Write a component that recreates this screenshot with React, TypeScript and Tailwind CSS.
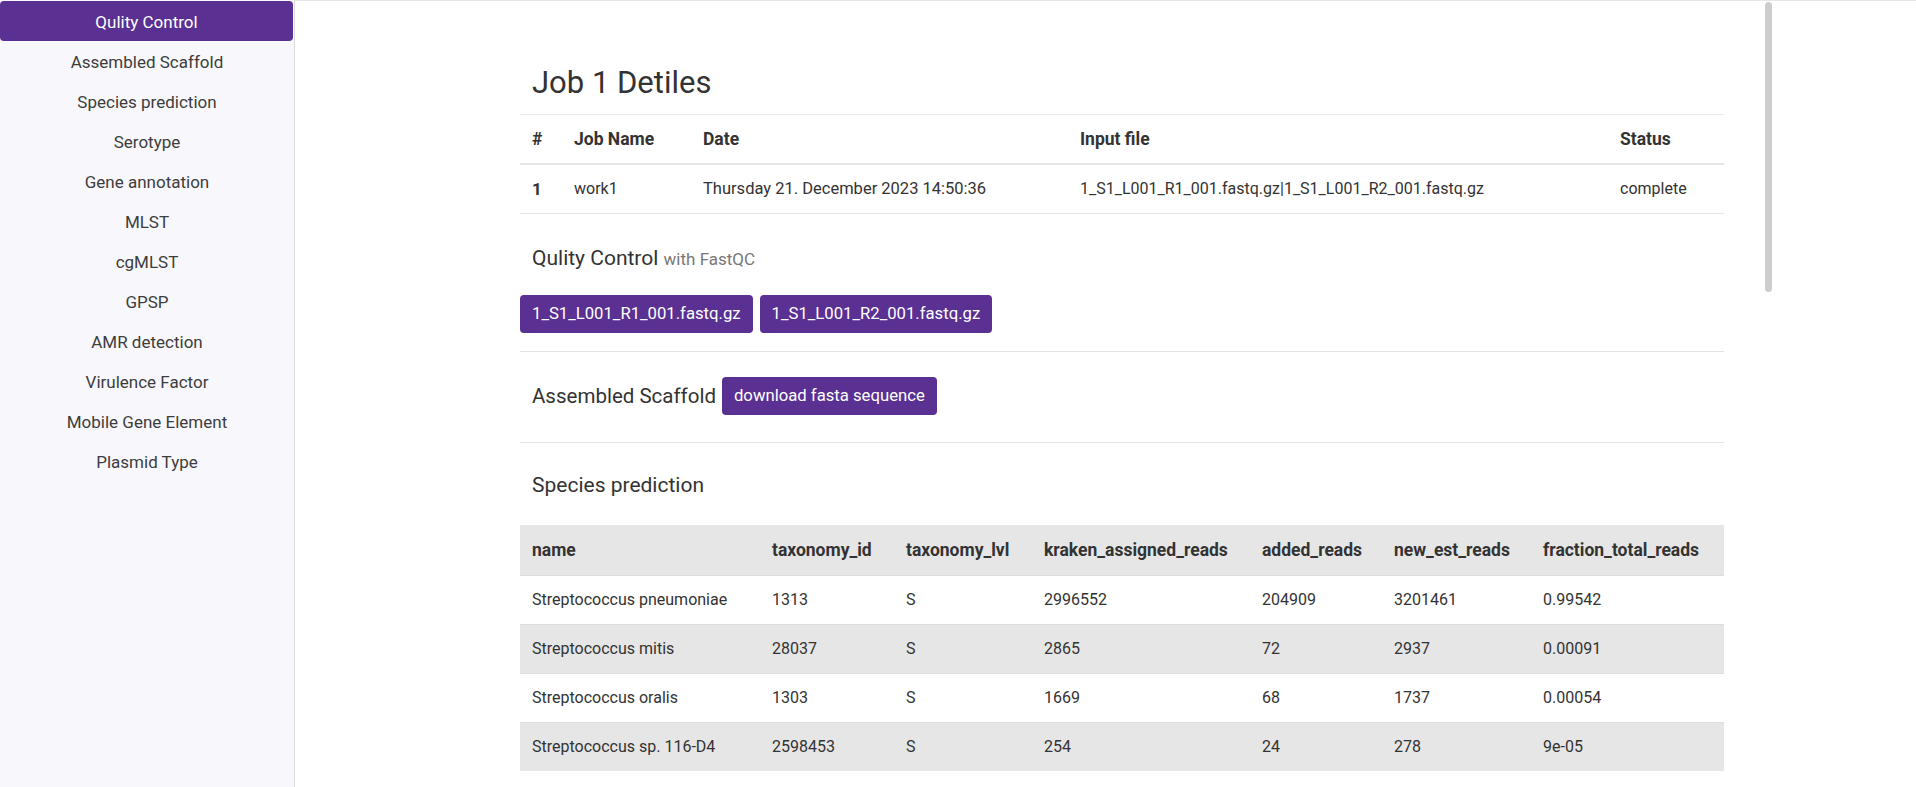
import React from 'react'

const font = { fontFamily: 'Roboto, "Liberation Sans", sans-serif' }

const menu = [
  'Qulity Control',
  'Assembled Scaffold',
  'Species prediction',
  'Serotype',
  'Gene annotation',
  'MLST',
  'cgMLST',
  'GPSP',
  'AMR detection',
  'Virulence Factor',
  'Mobile Gene Element',
  'Plasmid Type',
]

const species = [
  ['Streptococcus pneumoniae', '1313', 'S', '2996552', '204909', '3201461', '0.99542'],
  ['Streptococcus mitis', '28037', 'S', '2865', '72', '2937', '0.00091'],
  ['Streptococcus oralis', '1303', 'S', '1669', '68', '1737', '0.00054'],
  ['Streptococcus sp. 116-D4', '2598453', 'S', '254', '24', '278', '9e-05'],
]

const speciesCols = ['name', 'taxonomy_id', 'taxonomy_lvl', 'kraken_assigned_reads', 'added_reads', 'new_est_reads', 'fraction_total_reads']
const speciesWidths = ['w-[240px]', 'w-[134px]', 'w-[138px]', 'w-[218px]', 'w-[132px]', 'w-[149px]', 'w-[193px]']

function PurpleButton({ children }: { children: React.ReactNode }) {
  return (
    <button className="h-[38px] px-3 rounded-[4px] bg-[#5a3093] text-white text-[16.7px] leading-6 whitespace-nowrap">
      {children}
    </button>
  )
}

export default function App() {
  return (
    <div className="flex h-[787px] w-full overflow-hidden bg-white text-[#333]" style={font}>
      {/* side menu */}
      <aside className="w-[295px] shrink-0 bg-[#f8f8fc] border-r border-[#dcdcdc] pt-[1px]">
        {menu.map((m, i) => (
          <div
            key={m}
            className={
              i === 0
                ? 'h-10 pt-[3px] mr-[1px] flex items-center justify-center rounded-[4px] bg-[#5a3093] text-white text-[17px]'
                : 'h-10 pt-[3px] flex items-center justify-center text-[17px] text-[#3d3d3d]'
            }
          >
            {m}
          </div>
        ))}
      </aside>

      {/* main pane */}
      <main className="relative flex-1 border-t border-[#e6e6e6]">
        <div className="ml-[225px] w-[1204px] pt-[62px]">
          <h2 className="px-3 text-[31px] leading-10 font-normal text-[#333]">Job 1 Detiles</h2>

          <table className="mt-[11px] w-full text-left text-[16px] border-collapse">
            <thead>
              <tr className="border-t border-[#e9e9e9] border-b-2 border-b-[#e6e6e6] text-[17.5px]">
                <th className="w-[42px] px-3 py-3 leading-6 font-bold">#</th>
                <th className="w-[129px] px-3 py-3 leading-6 font-bold">Job Name</th>
                <th className="w-[377px] px-3 py-3 leading-6 font-bold">Date</th>
                <th className="w-[540px] px-3 py-3 leading-6 font-bold">Input file</th>
                <th className="px-3 py-3 leading-6 font-bold">Status</th>
              </tr>
            </thead>
            <tbody>
              <tr className="border-b border-[#e6e6e6]">
                <td className="px-3 py-3 leading-6 font-bold text-[17px]">1</td>
                <td className="px-3 py-3 leading-6">work1</td>
                <td className="px-3 py-3 leading-6 text-[16.5px]">Thursday 21. December 2023 14:50:36</td>
                <td className="px-3 py-3 leading-6">1_S1_L001_R1_001.fastq.gz|1_S1_L001_R2_001.fastq.gz</td>
                <td className="px-3 py-3 leading-6">complete</td>
              </tr>
            </tbody>
          </table>

          <h5 className="mt-[29px] px-3 text-[21px] leading-[30px]">
            Qulity Control <span className="text-[17px] text-[#777]">with FastQC</span>
          </h5>
          <div className="mt-[21px] flex gap-[7px]">
            <PurpleButton>1_S1_L001_R1_001.fastq.gz</PurpleButton>
            <PurpleButton>1_S1_L001_R2_001.fastq.gz</PurpleButton>
          </div>

          <hr className="mt-[18px] border-[#e3e3e3]" />

          <div className="mt-[25px] flex items-center gap-[6px] px-3">
            <h5 className="text-[20.5px] leading-[30px]">Assembled Scaffold</h5>
            <PurpleButton>download fasta sequence</PurpleButton>
          </div>

          <hr className="mt-[27px] border-[#e3e3e3]" />

          <h5 className="mt-[27px] px-3 text-[21px] leading-[30px]">Species prediction</h5>

          <table className="mt-[25px] w-full text-left text-[16px] border-collapse">
            <thead>
              <tr className="bg-[#e6e6e6] text-[17.5px]">
                {speciesCols.map((c, i) => (
                  <th key={c} className={`${speciesWidths[i]} px-3 py-[13px] leading-6 font-bold`}>
                    {c}
                  </th>
                ))}
              </tr>
            </thead>
            <tbody>
              {species.map((row, r) => (
                <tr key={row[0]} className={r % 2 === 1 ? 'bg-[#e6e6e6] border-t border-[#dedede]' : 'border-t border-[#dedede]'}>
                  {row.map((v, i) => (
                    <td key={i} className="px-3 py-3 leading-6">
                      {v}
                    </td>
                  ))}
                </tr>
              ))}
            </tbody>
          </table>
        </div>

        {/* scroll thumb */}
        <div className="absolute left-[1470px] top-[1px] h-[290px] w-[7px] rounded-full bg-[#cdcdcd]" />
      </main>
    </div>
  )
}
